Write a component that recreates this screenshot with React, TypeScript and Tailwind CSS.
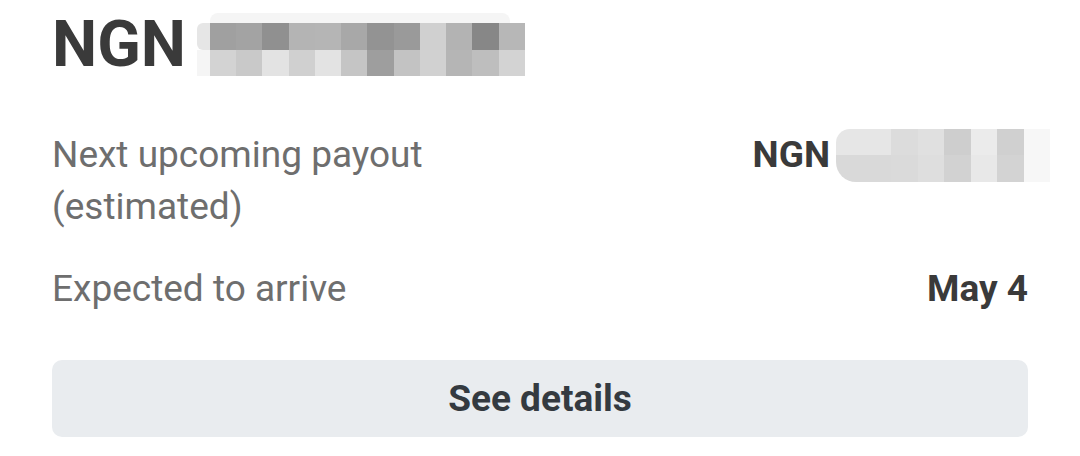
import React from "react";

const topRow = [
  "bg-[#a0a0a0]", "bg-[#a3a3a3]", "bg-[#909090]", "bg-[#b4b4b4]", "bg-[#b5b5b5]", "bg-[#a8a8a8]",
  "bg-[#939393]", "bg-[#9a9a9a]", "bg-[#d0d0d0]", "bg-[#b3b3b3]", "bg-[#878787]", "bg-[#b7b7b7]",
];
const bottomRow = [
  "bg-[#d3d3d3]", "bg-[#c9c9c9]", "bg-[#e3e3e3]", "bg-[#d0d0d0]", "bg-[#e3e3e3]", "bg-[#c5c5c5]",
  "bg-[#9e9e9e]", "bg-[#c3c3c3]", "bg-[#d1d1d1]", "bg-[#b5b5b5]", "bg-[#bebebe]", "bg-[#d3d3d3]",
];

const rTop = ["bg-[#dcdcdc]", "bg-[#e0e0e0]", "bg-[#cecece]", "bg-[#ebebeb]", "bg-[#d0d0d0]"];
const rBottom = ["bg-[#dadada]", "bg-[#dedede]", "bg-[#d2d2d2]", "bg-[#e8e8e8]", "bg-[#d3d3d3]"];

function HeaderBlur() {
  return (
    <div className="ml-[11px] flex h-[63px] w-[328px] flex-col">
      <div className="ml-[13px] h-[10px] w-[300px] rounded-t-[8px] bg-[#f5f5f5]" />
      <div className="flex h-[53px]">
        <div className="flex w-[13px] flex-col">
          <div className="h-1/2 rounded-l-[6px] bg-[#e6e6e6]" />
          <div className="h-1/2 bg-[#f5f5f5]" />
        </div>
        <div className="grid flex-1 grid-cols-12 grid-rows-2">
          {topRow.map((c, i) => (
            <div key={"t" + i} className={c} />
          ))}
          {bottomRow.map((c, i) => (
            <div key={"b" + i} className={c} />
          ))}
        </div>
      </div>
    </div>
  );
}

function ValueBlur() {
  return (
    <div className="-mr-[22px] ml-[6px] flex h-[53px] w-[214px]">
      <div className="flex w-[55px] flex-col">
        <div className="h-1/2 rounded-tl-[14px] bg-[#e6e6e6]" />
        <div className="h-1/2 rounded-bl-[20px] bg-[#d9d9d9]" />
      </div>
      <div className="grid flex-1 grid-cols-5 grid-rows-2">
        {rTop.map((c, i) => (
          <div key={"t" + i} className={c} />
        ))}
        {rBottom.map((c, i) => (
          <div key={"b" + i} className={c} />
        ))}
      </div>
      <div className="w-[26px] bg-[#f7f7f7]" />
    </div>
  );
}

export default function App() {
  return (
    <div
      className="h-[456px] w-[1080px] bg-white pl-[52px] pr-[52px] pt-[6px]"
      style={{ fontFamily: "Roboto, 'Noto Sans', sans-serif" }}
    >
      <div className="flex items-center">
        <span className="text-[64px] font-bold leading-[77px] text-[#3a3a3a]">NGN</span>
        <HeaderBlur />
      </div>

      <div className="mt-[46px] flex items-start justify-between">
        <div className="w-[400px] text-[37px] leading-[52px] text-[#6e6e6e]">
          Next upcoming payout (estimated)
        </div>
        <div className="flex h-[52px] items-center">
          <span className="text-[37px] font-bold leading-[52px] text-[#3a3a3a]">NGN</span>
          <ValueBlur />
        </div>
      </div>

      <div className="mt-[30px] flex items-start justify-between">
        <div className="text-[37px] leading-[52px] text-[#6e6e6e]">Expected to arrive</div>
        <div className="text-[37px] font-bold leading-[52px] text-[#3a3a3a]">May 4</div>
      </div>

      <button className="mt-[45px] flex h-[77px] w-full items-center justify-center rounded-[10px] bg-[#e9ecef] text-[37px] font-bold text-[#343a40]">
        See details
      </button>
    </div>
  );
}
